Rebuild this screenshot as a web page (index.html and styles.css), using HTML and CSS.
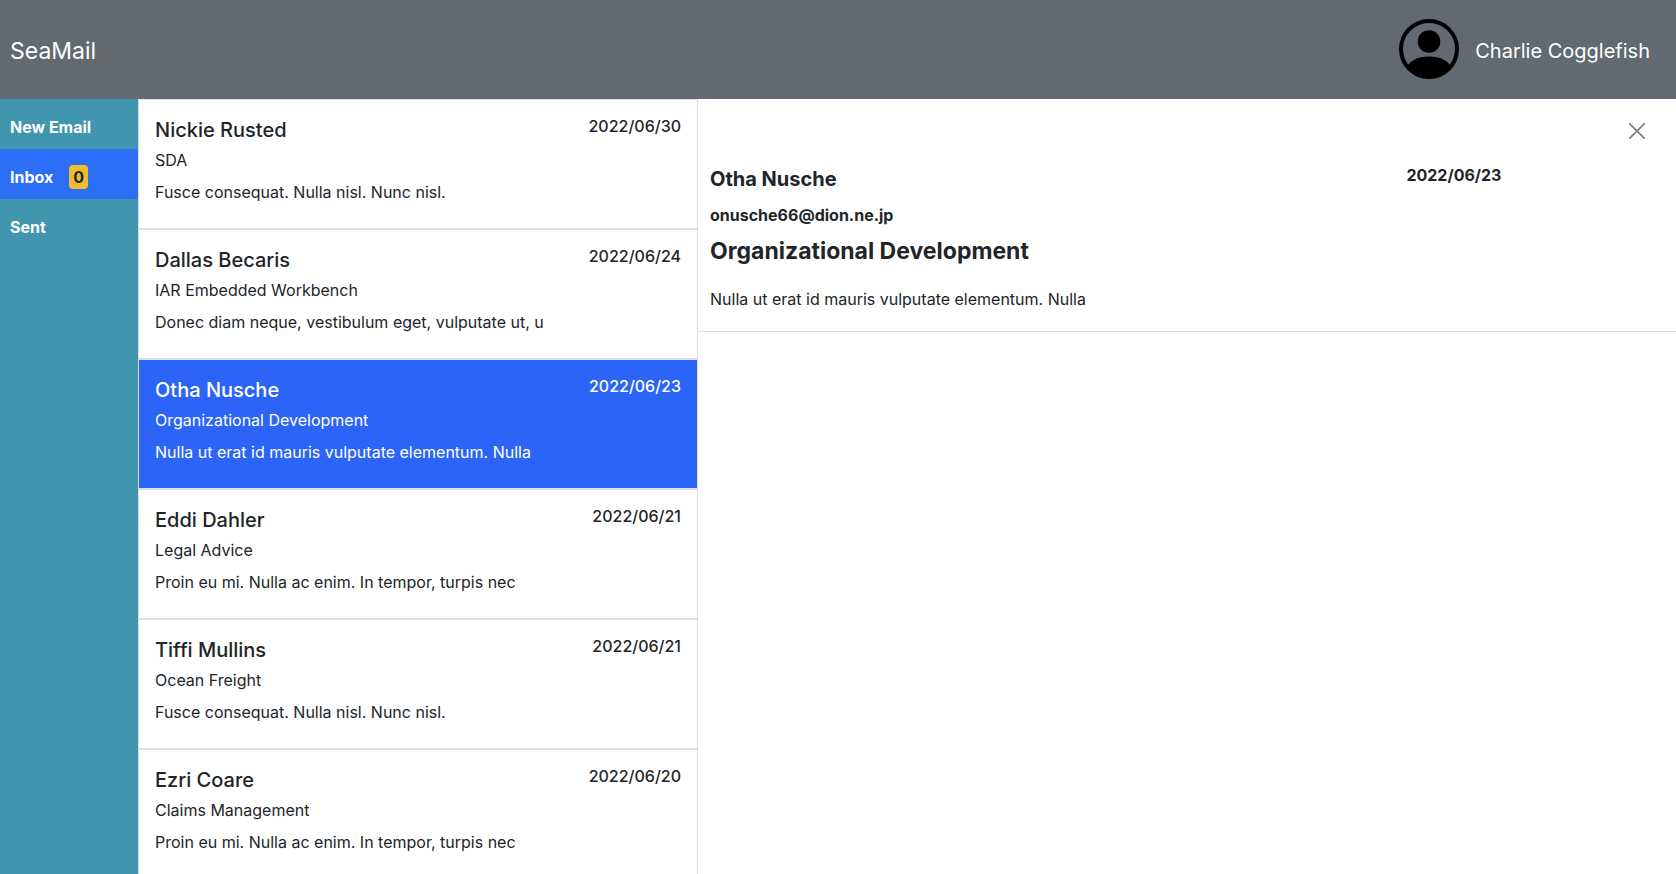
FILE: index.html
```html
<!DOCTYPE html>
<html lang="en">
<head>
<meta charset="utf-8">
<meta name="viewport" content="width=device-width, initial-scale=1">
<title>SeaMail</title>
<link rel="stylesheet" href="styles.css">
</head>
<body>
<div class="app">
  <header class="topbar">
    <a class="brand" href="#">SeaMail</a>
    <div class="account">
      <svg class="avatar" viewBox="0 0 60 60" aria-hidden="true">
        <defs><clipPath id="disc"><circle cx="30" cy="30" r="29"/></clipPath></defs>
        <circle cx="30" cy="30" r="28" fill="none" stroke="#000" stroke-width="4"/>
        <circle cx="30" cy="22.500" r="11.300"/>
        <path clip-path="url(#disc)" d="M7 49C11 42 18 37.500 30 37.500S49 42 53 49L50 60H10Z"/>
      </svg>
      <span class="account-name">Charlie Cogglefish</span>
    </div>
  </header>
  <div class="workspace">
    <nav class="sidebar">
      <button class="nav-button" type="button">New Email</button>
      <button class="nav-button active" type="button">Inbox <span class="badge">0</span></button>
      <button class="nav-button" type="button">Sent</button>
    </nav>
    <main class="mail-list">
      <article class="mail">
        <div class="mail-head"><h2 class="sender">Nickie Rusted</h2><time class="date">2022/06/30</time></div>
        <p class="line">SDA</p>
        <p class="line">Fusce consequat. Nulla nisl. Nunc nisl.</p>
      </article>
      <article class="mail">
        <div class="mail-head"><h2 class="sender">Dallas Becaris</h2><time class="date">2022/06/24</time></div>
        <p class="line">IAR Embedded Workbench</p>
        <p class="line">Donec diam neque, vestibulum eget, vulputate ut, u</p>
      </article>
      <article class="mail selected">
        <div class="mail-head"><h2 class="sender">Otha Nusche</h2><time class="date">2022/06/23</time></div>
        <p class="line">Organizational Development</p>
        <p class="line">Nulla ut erat id mauris vulputate elementum. Nulla</p>
      </article>
      <article class="mail">
        <div class="mail-head"><h2 class="sender">Eddi Dahler</h2><time class="date">2022/06/21</time></div>
        <p class="line">Legal Advice</p>
        <p class="line">Proin eu mi. Nulla ac enim. In tempor, turpis nec</p>
      </article>
      <article class="mail">
        <div class="mail-head"><h2 class="sender">Tiffi Mullins</h2><time class="date">2022/06/21</time></div>
        <p class="line">Ocean Freight</p>
        <p class="line">Fusce consequat. Nulla nisl. Nunc nisl.</p>
      </article>
      <article class="mail">
        <div class="mail-head"><h2 class="sender">Ezri Coare</h2><time class="date">2022/06/20</time></div>
        <p class="line">Claims Management</p>
        <p class="line">Proin eu mi. Nulla ac enim. In tempor, turpis nec</p>
      </article>
    </main>
    <section class="reader">
      <div class="reader-tools">
        <button class="close" type="button" aria-label="Close">
          <svg viewBox="0 0 16 16" aria-hidden="true"><path d="M.8.8 15.200 15.200M15.200.8.8 15.200" fill="none" stroke="#000" stroke-width="1.700" stroke-linecap="round"/></svg>
        </button>
      </div>
      <div class="message">
        <div class="message-head">
          <h2 class="from">Otha Nusche</h2>
          <time class="sent-on">2022/06/23</time>
        </div>
        <p class="address">onusche66@dion.ne.jp</p>
        <h1 class="subject">Organizational Development</h1>
        <p class="body-text">Nulla ut erat id mauris vulputate elementum. Nulla</p>
      </div>
    </section>
  </div>
</div>
</body>
</html>
```

FILE: styles.css
```css
* { box-sizing: border-box; }

body {
  margin: 0;
  font: 400 16px/24px Inter, "Liberation Sans", sans-serif;
  color: #212529;
  background: #fff;
}

h1, h2, p { margin: 0; }

.app {
  display: flex;
  flex-direction: column;
  height: 100vh;
  overflow: hidden;
}

.topbar {
  display: flex;
  align-items: center;
  justify-content: space-between;
  padding: 19px 26px 20px 10px;
  background: #636970;
  color: #fff;
}

.brand {
  padding-top: 4px;
  font-size: 23px;
  line-height: 32px;
  color: inherit;
  text-decoration: none;
}

.account {
  display: flex;
  align-items: center;
  gap: 16px;
}

.avatar { width: 60px; height: 60px; }

.account-name {
  padding-top: 4px;
  font-size: 20px;
}

.workspace {
  display: grid;
  grid-template-columns: 138fr 560fr 978fr;
  flex: 1;
  min-height: 0;
}

.sidebar {
  display: flex;
  flex-direction: column;
  background: #4295ae;
}

.nav-button {
  display: flex;
  align-items: center;
  gap: 16px;
  height: 50px;
  padding: 6px 10px 0;
  border: 0;
  background: transparent;
  color: #fff;
  font: inherit;
  font-weight: 700;
  text-align: left;
}

.nav-button.active { background: #2c6ff6; }

.badge {
  padding: 0 4px;
  border-radius: 4px;
  background: #f3bb30;
  color: #212529;
}

.mail-list { overflow: hidden; }

.mail {
  padding: 16px 16px 24px;
  border: 1px solid #dadde1;
}

.mail.selected {
  background: #2c64f8;
  color: #fff;
}

.mail-head {
  display: flex;
  justify-content: space-between;
  align-items: flex-start;
  margin-bottom: 4px;
}

.line + .line { margin-top: 8px; }

.sender {
  font-size: 20px;
  font-weight: 500;
  line-height: 28px;
}

.date {
  font-weight: 500;
  line-height: 20px;
}

.reader-tools {
  display: flex;
  justify-content: flex-end;
  padding: 20px 27px;
}

.close {
  display: flex;
  padding: 4px;
  border: 0;
  background: transparent;
  opacity: 0.5;
}

.close svg { width: 16px; height: 16px; }

.message {
  padding: 4px 12px 20px;
  border-bottom: 1px solid #dadde1;
}

.message-head {
  display: grid;
  grid-template-columns: 73% 1fr;
  align-items: start;
  margin-bottom: 12px;
}

.from {
  font-size: 20px;
  font-weight: 700;
  line-height: 24px;
}

.sent-on {
  font-weight: 700;
  line-height: 16px;
}

.address { font-weight: 700; }

.subject {
  margin: 8px 0 20px;
  font-size: 23px;
  font-weight: 700;
  line-height: 32px;
}
```
